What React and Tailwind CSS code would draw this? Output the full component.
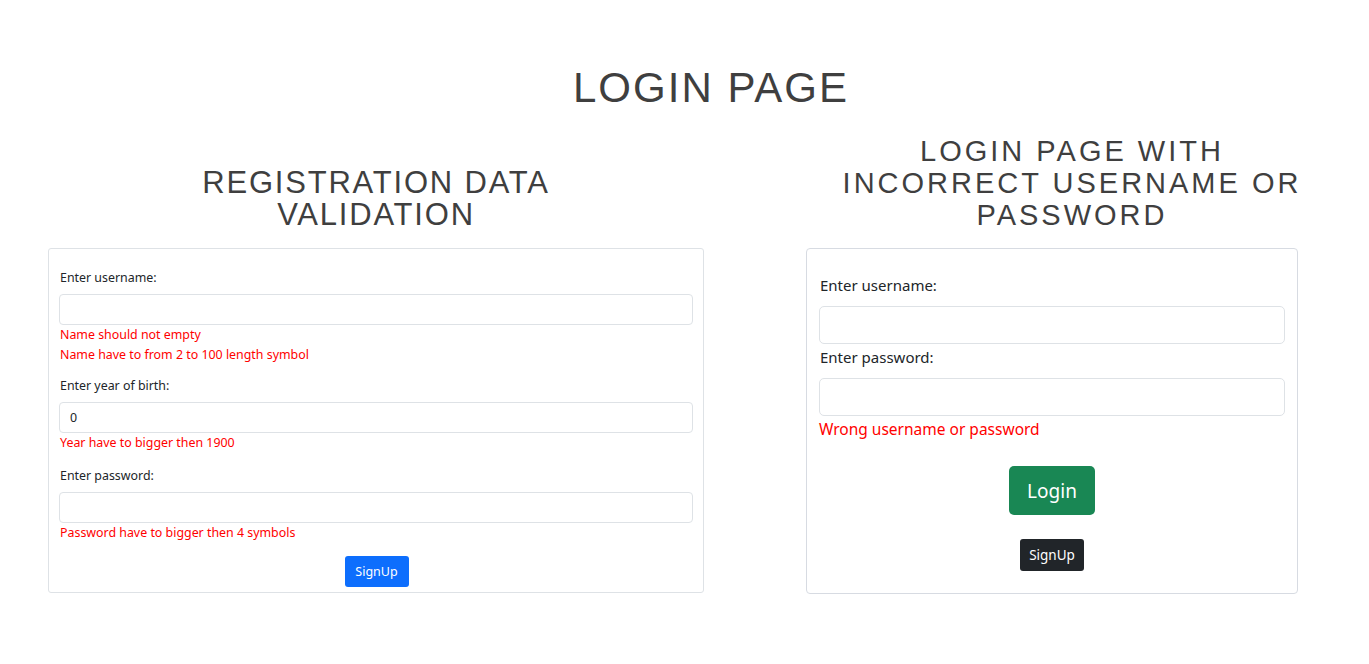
export default function App() {
  const ui = { fontFamily: '"Noto Sans", "Open Sans", sans-serif' };
  const head = { fontFamily: '"Liberation Sans", Arial, sans-serif' };
  return (
    <div className="w-[1369px] h-[664px] bg-white overflow-hidden text-[#212529]">
      <div className="pt-[64px] pl-[53px]">
        <h1 style={head} className="text-center text-[42px] leading-[48px] tracking-[2px] text-[#3f3f3f]">LOGIN PAGE</h1>
      </div>
      <div className="mt-[23px] flex items-start">
        {/* Left column */}
        <div className="ml-[48px] w-[656px] flex flex-col">
          <div className="h-[96px] flex items-end justify-center">
            <h2 style={head} className="text-center text-[31px] leading-[32px] tracking-[1.8px] text-[#3f3f3f]">
              REGISTRATION DATA<br />VALIDATION
            </h2>
          </div>
          <div style={ui} className="mt-[17px] border border-[#dee2e6] rounded-[3px] px-[10px] pt-[19px] pb-[5px] text-[12.4px] leading-[20px]">
            <div className="pl-[1px]">Enter username:</div>
            <div className="mt-[6px] h-[31px] border border-[#dee2e6] rounded-[4px]"></div>
            <div className="text-[#ff0000] pl-[1px]">Name should not empty</div>
            <div className="text-[#ff0000] pl-[1px]">Name have to from 2 to 100 length symbol</div>
            <div className="mt-[11px] pl-[1px]">Enter year of birth:</div>
            <div className="mt-[6px] h-[31px] border border-[#dee2e6] rounded-[4px] flex items-center px-[10px]">0</div>
            <div className="text-[#ff0000] pl-[1px]">Year have to bigger then 1900</div>
            <div className="mt-[13px] pl-[1px]">Enter password:</div>
            <div className="mt-[6px] h-[31px] border border-[#dee2e6] rounded-[4px]"></div>
            <div className="text-[#ff0000] pl-[1px]">Password have to bigger then 4 symbols</div>
            <div className="mt-[13px] flex justify-center pl-[1px]">
              <div className="h-[31px] w-[64px] bg-[#0d6efd] text-white rounded-[3px] flex items-center justify-center text-[12.5px]">SignUp</div>
            </div>
          </div>
        </div>
        {/* Right column */}
        <div className="ml-[102px] w-[492px] flex flex-col">
          <div className="h-[96px] flex items-end justify-center w-[532px]">
            <h2 style={head} className="text-center text-[29px] leading-[32px] tracking-[3px] text-[#3f3f3f]">
              LOGIN PAGE WITH<br />INCORRECT USERNAME OR<br />PASSWORD
            </h2>
          </div>
          <div style={ui} className="mt-[17px] border border-[#d7dbe2] rounded-[4px] px-[12px] pt-[24px] pb-[22px] text-[15px] leading-[24px]">
            <div className="pl-[1px]">Enter username:</div>
            <div className="mt-[9px] h-[38px] border border-[#dee2e6] rounded-[5px]"></div>
            <div className="mt-[1px] pl-[1px]">Enter password:</div>
            <div className="mt-[9px] h-[38px] border border-[#dee2e6] rounded-[5px]"></div>
            <div className="mt-[1px] text-[#ff0000] text-[15.5px]">Wrong username or password</div>
            <div className="mt-[25px] flex justify-center">
              <div className="h-[49px] w-[86px] bg-[#198754] text-white rounded-[5px] flex items-center justify-center text-[19px]">Login</div>
            </div>
            <div className="mt-[24px] flex justify-center">
              <div className="h-[32px] w-[64px] bg-[#212529] text-white rounded-[3px] flex items-center justify-center text-[13.5px]">SignUp</div>
            </div>
          </div>
        </div>
      </div>
    </div>
  );
}
